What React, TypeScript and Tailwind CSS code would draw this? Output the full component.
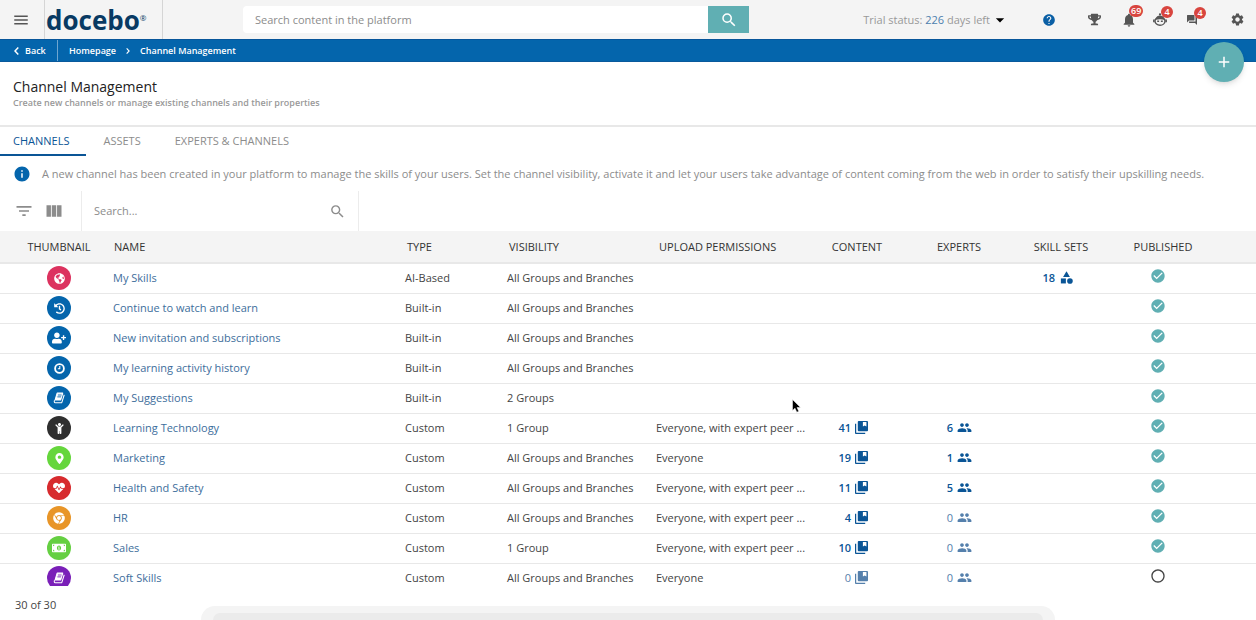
import { type FC, type ReactNode, useState } from 'react';
import {
    MdAdd,
    MdArrowDropDown,
    MdCategory,
    MdCheckCircle,
    MdFilterList,
    MdForum,
    MdGroup,
    MdHelp,
    MdInfo,
    MdMenu,
    MdNotifications,
    MdRadioButtonUnchecked,
    MdSearch,
    MdSettings,
    MdViewColumn,
} from 'react-icons/md';
import {
    FaChild,
    FaChrome,
    FaGlobeAmericas,
    FaHeartbeat,
    FaHistory,
    FaMapMarkerAlt,
    FaMoneyBillAlt,
    FaTrophy,
    FaUserPlus,
} from 'react-icons/fa';

interface Channel {
    name: string;
    icon: ReactNode;
    color: string;
    type: string;
    visibility: string;
    upload?: string;
    content?: number;
    experts?: number;
    skills?: number;
    published: boolean;
}

const ALL = 'All Groups and Branches';
const PEER = 'Everyone, with expert peer ...';

// Slanted closed book
const BookIcon: FC<{ lines: string }> = ({ lines }) => (
    <svg viewBox="0 0 16 16" className="size-3" fill="none" stroke="currentColor">
        <path d="M5.5 1.5h7.500l-2.700 9H2.800z" fill="currentColor" strokeWidth="1.4" strokeLinejoin="round" />
        <path d="M2.300 11.200c-1.200 1-.6 3 .6 3h8.800l3.300-10.500" strokeWidth="1.4" strokeLinejoin="round" />
        <path d="M6.500 4h5M5.800 6.500h5" className={lines} strokeWidth="1.200" />
    </svg>
);

const ClockIcon = () => (
    <svg viewBox="0 0 12 12" className="size-[11px]" fill="none" stroke="currentColor">
        <circle cx="6" cy="6" r="4.800" strokeWidth="2" />
        <path d="M6.300 3.300v3H4.200" strokeWidth="1.200" />
    </svg>
);

const channels: Channel[] = [
    { name: 'My Skills', icon: <FaGlobeAmericas />, color: 'bg-[#dc325f]', type: 'AI-Based', visibility: ALL, skills: 18, published: true },
    { name: 'Continue to watch and learn', icon: <FaHistory />, color: 'bg-[#0465ac]', type: 'Built-in', visibility: ALL, published: true },
    { name: 'New invitation and subscriptions', icon: <FaUserPlus className="size-3.5" />, color: 'bg-[#0465ac]', type: 'Built-in', visibility: ALL, published: true },
    { name: 'My learning activity history', icon: <ClockIcon />, color: 'bg-[#0465ac]', type: 'Built-in', visibility: ALL, published: true },
    { name: 'My Suggestions', icon: <BookIcon lines="stroke-[#0465ac]" />, color: 'bg-[#0465ac]', type: 'Built-in', visibility: '2 Groups', published: true },
    { name: 'Learning Technology', icon: <FaChild />, color: 'bg-[#2f2f2f]', type: 'Custom', visibility: '1 Group', upload: PEER, content: 41, experts: 6, published: true },
    { name: 'Marketing', icon: <FaMapMarkerAlt />, color: 'bg-[#65d63c]', type: 'Custom', visibility: ALL, upload: 'Everyone', content: 19, experts: 1, published: true },
    { name: 'Health and Safety', icon: <FaHeartbeat className="size-3" />, color: 'bg-[#d72b2e]', type: 'Custom', visibility: ALL, upload: PEER, content: 11, experts: 5, published: true },
    { name: 'HR', icon: <FaChrome className="size-3" />, color: 'bg-[#e89528]', type: 'Custom', visibility: ALL, upload: PEER, content: 4, experts: 0, published: true },
    { name: 'Sales', icon: <FaMoneyBillAlt className="size-3.5" />, color: 'bg-[#65cf42]', type: 'Custom', visibility: '1 Group', upload: PEER, content: 10, experts: 0, published: true },
    { name: 'Soft Skills', icon: <BookIcon lines="stroke-[#7a1fb8]" />, color: 'bg-[#7a1fb8]', type: 'Custom', visibility: ALL, upload: 'Everyone', content: 0, experts: 0, published: false },
];

const LibraryIcon = () => (
    <svg viewBox="0 0 14 14" className="size-[13px] mb-0.5" fill="currentColor">
        <path fillRule="evenodd" d="M4 0h9a1 1 0 0 1 1 1v9a1 1 0 0 1-1 1H4a1 1 0 0 1-1-1V1a1 1 0 0 1 1-1zm4.500 1v5l1.900-1.200L12.300 6V1z" />
        <path d="M0 3h1.300v9.700H11V14H1a1 1 0 0 1-1-1z" />
    </svg>
);

const BotIcon = () => (
    <svg viewBox="0 0 16 16" className="size-3.5" fill="none" stroke="#555">
        <circle cx="8" cy="1.600" r="1.300" fill="#555" stroke="none" />
        <path d="M2.500 7C3.500 3.800 6 2.800 8 2.800s4.500 1 5.500 4.200z" fill="#555" stroke="none" />
        <path d="M2.300 9c0-1.800 1.700-3 5.700-3s5.700 1.200 5.700 3c0 3-2.600 5-5.700 5S2.300 12 2.300 9z" strokeWidth="1.600" />
        <path d="M1 7.500v3M15 7.500v3" strokeWidth="1.800" />
        <path d="M4.800 9.500H7M9 9.500h2.200" strokeWidth="1.800" />
    </svg>
);

const Badge: FC<{ count: number }> = ({ count }) => (
    <span className="absolute left-2 -top-[7px] h-3 min-w-3 px-0.5 rounded-full bg-[#d8453f] text-white text-[9px] leading-3 font-semibold text-center">
        {count}
    </span>
);

const Count: FC<{ value?: number; label: string; children: ReactNode }> = ({ value, label, children }) => {
    if (value === undefined) return null;
    return (
        <a
            href="#"
            aria-label={`${value} ${label}`}
            className={`flex items-center justify-end gap-1 ${value === 0 ? 'text-[#5580ac]' : 'text-[#0a5596] font-semibold'}`}
        >
            <span>{value}</span>
            {children}
        </a>
    );
};

const TopBar = () => (
    <header className="flex items-center h-[39px] bg-[#f4f4f4] text-[#555] shrink-0">
        <button aria-label="Menu" className="w-11 pl-3 shrink-0">
            <MdMenu className="size-[18px]" />
        </button>
        <a href="#" className="flex items-center h-full w-[119px] pl-px border-x border-[#d5d5d5] text-[#083a63] shrink-0">
            <span className="text-[26px] leading-8 font-bold">docebo</span>
            <span className="text-[8px] leading-3 pb-1">®</span>
        </a>
        <form className="flex ml-20 w-[506px] h-[27px]" onSubmit={(e) => e.preventDefault()}>
            <input
                type="text"
                aria-label="Search content in the platform"
                placeholder="Search content in the platform"
                className="flex-1 min-w-0 bg-white rounded-l-sm px-3 text-[11px] outline-none placeholder:text-[#8c8c8c]"
            />
            <button aria-label="Search" className="w-[41px] flex items-center justify-center bg-[#60afb3] text-white">
                <MdSearch className="size-[18px]" />
            </button>
        </form>
        <div className="ml-auto flex items-center shrink-0">
            <button className="flex items-center text-[11px] text-[#999] mr-8">
                <span>Trial status: <span className="text-[#4c7fae]">226</span> days left</span>
                <MdArrowDropDown className="size-5 text-black" />
            </button>
            <button aria-label="Help" className="mr-8"><MdHelp className="size-3.5 text-[#0a5fa5]" /></button>
            <button aria-label="Achievements" className="mr-5"><FaTrophy className="size-[13px]" /></button>
            <button aria-label="Notifications" className="relative mr-4"><MdNotifications className="size-4" /><Badge count={69} /></button>
            <button aria-label="Assistant" className="relative mr-[19px]"><BotIcon /><Badge count={4} /></button>
            <button aria-label="Messages" className="relative mr-8"><MdForum className="size-3" /><Badge count={4} /></button>
            <button aria-label="Settings" className="mr-[11px]"><MdSettings className="size-[15px]" /></button>
        </div>
    </header>
);

const Breadcrumbs = () => (
    <nav className="relative flex items-center h-[23px] bg-[#0465ac] border-y border-t-[#07559a] border-b-[#0a5a9c] text-white text-[9px] font-semibold shrink-0">
        <a href="#" className="flex items-center gap-1.5 w-[58px] h-full pl-3.5 border-r border-[#6fa6d0]">
            <svg viewBox="0 0 5 8" className="w-[5px] h-2" fill="none" stroke="currentColor" strokeWidth="1.500"><path d="M4.300.6 1 4l3.300 3.400" /></svg>
            Back
        </a>
        <a href="#" className="pl-[11px]">Homepage</a>
        <svg viewBox="0 0 5 8" className="w-1 h-1.5 mx-2.5" fill="none" stroke="currentColor" strokeWidth="1.500"><path d="M.7.6 4 4 .7 7.400" /></svg>
        <span>Channel Management</span>
        <button aria-label="Add channel" className="absolute right-3 top-0.5 size-10 rounded-full bg-[#60afb3] shadow-md flex items-center justify-center">
            <MdAdd className="size-[18px]" />
        </button>
    </nav>
);

const tabs = ['CHANNELS', 'ASSETS', 'EXPERTS & CHANNELS'];

export default function App() {
    const [tab, setTab] = useState(tabs[0]);

    return (
        <div className="relative h-screen overflow-hidden flex flex-col bg-white text-[#444] text-[11px] leading-4 font-['Open_Sans','Noto_Sans',sans-serif]">
            <TopBar />
            <Breadcrumbs />

            <div className="px-[13px] pt-4 pb-[15px] border-b-2 border-[#e8e8e8]">
                <h1 className="text-[14px] leading-[18px] text-[#222]">Channel Management</h1>
                <p className="text-[9px] leading-3.5 text-[#999] font-semibold">Create new channels or manage existing channels and their properties</p>
            </div>

            <div role="tablist" className="flex h-[29px]">
                {tabs.map((t) => (
                    <button
                        key={t}
                        role="tab"
                        aria-selected={t === tab}
                        onClick={() => setTab(t)}
                        className={`pl-[13px] pr-[17px] mr-1 border-b-2 font-medium ${t === tab ? 'text-[#0a5596] border-[#0a5596]' : 'text-[#8c8c8c] border-transparent'}`}
                    >
                        {t}
                    </button>
                ))}
            </div>

            <div className="flex items-center gap-[11px] px-[13px] h-[35px] text-[#8c8c8c] font-medium">
                <MdInfo className="size-[18px] shrink-0 text-[#0465ac]" />
                <p>A new channel has been created in your platform to manage the skills of your users. Set the channel visibility, activate it and let your users take advantage of content coming from the web in order to satisfy their upskilling needs.</p>
            </div>

            <div className="flex items-center h-10 shrink-0 text-[#8c8c8c]">
                <button aria-label="Filters" className="ml-3.5"><MdFilterList className="size-5" /></button>
                <button aria-label="Columns" className="ml-2.5 mr-[17px]"><MdViewColumn className="size-5" /></button>
                <label className="flex items-center h-full w-[278px] border-x border-[#ececec] pl-3 pr-3">
                    <input type="text" aria-label="Search channels" placeholder="Search..." className="flex-1 min-w-0 outline-none placeholder:text-[#8c8c8c]" />
                    <MdSearch className="size-[17px]" />
                </label>
            </div>

            <div className="flex-1 min-h-0 overflow-hidden">
                <table className="w-full table-fixed border-collapse text-left">
                    <colgroup>
                        <col className="w-[110px]" />
                        <col />
                        <col className="w-[102px]" />
                        <col className="w-[149px]" />
                        <col className="w-[153px]" />
                        <col className="w-[102px]" />
                        <col className="w-[102px]" />
                        <col className="w-[102px]" />
                        <col className="w-[102px]" />
                        <col className="w-[42px]" />
                    </colgroup>
                    <thead>
                        <tr className="h-8 bg-[#f4f4f4] border-b-2 border-[#e8e8e8] text-[#333] *:font-medium">
                            <th className="pl-2 text-center">THUMBNAIL</th>
                            <th className="pl-1">NAME</th>
                            <th className="pl-[5px]">TYPE</th>
                            <th className="pl-[5px]">VISIBILITY</th>
                            <th className="pl-1.5">UPLOAD PERMISSIONS</th>
                            <th className="text-center">CONTENT</th>
                            <th className="text-center">EXPERTS</th>
                            <th className="text-center">SKILL SETS</th>
                            <th className="text-center">PUBLISHED</th>
                            <th aria-label="Actions"></th>
                        </tr>
                    </thead>
                    <tbody>
                        {channels.map((c) => (
                            <tr key={c.name} className="h-[30px] border-b border-[#e8e8e8]">
                                <td className="pl-2">
                                    <span className={`mx-auto size-6 rounded-full flex items-center justify-center text-white text-[11px] ${c.color}`}>{c.icon}</span>
                                </td>
                                <td className="pl-[3px]"><a href="#" className="text-[#3d6e9c]">{c.name}</a></td>
                                <td className="pl-[3px]">{c.type}</td>
                                <td className="pl-[3px]">{c.visibility}</td>
                                <td className="pl-[3px] whitespace-nowrap">{c.upload}</td>
                                <td className="pr-10"><Count value={c.content} label="content items"><LibraryIcon /></Count></td>
                                <td className="pr-[38px]"><Count value={c.experts} label="experts"><MdGroup className="size-[15px] mb-0.5" /></Count></td>
                                <td className="pr-[38px]"><Count value={c.skills} label="skill sets"><MdCategory className="size-[15px] mb-0.5" /></Count></td>
                                <td className="pr-12 pb-1">
                                    <button aria-label={c.published ? 'Unpublish' : 'Publish'} className="flex ml-auto">
                                        {c.published ? <MdCheckCircle className="size-4 text-[#60afb3]" /> : <MdRadioButtonUnchecked className="size-4" />}
                                    </button>
                                </td>
                                <td></td>
                            </tr>
                        ))}
                    </tbody>
                </table>
            </div>

            <footer className="h-[34px] pt-[11px] pl-[15px] shrink-0">30 of 30</footer>

            {/* Collapsed dock edge */}
            <div className="absolute bottom-0 inset-x-[16%] h-3.5 pt-[7px] px-3 rounded-t-[40px] bg-[#f4f4f4]">
                <div className="h-full rounded-t-[40px] bg-[#ebebeb]"></div>
            </div>

            {/* Mouse pointer */}
            <svg viewBox="0 0 9 14" className="absolute left-[792px] top-[399px] w-[9px] h-3.5">
                <path d="M.5.5v11l2.500-2.300 1.800 4 2-.9L5 8.500h3.500z" fill="#000" stroke="#fff" strokeWidth=".5" />
            </svg>
        </div>
    );
}
